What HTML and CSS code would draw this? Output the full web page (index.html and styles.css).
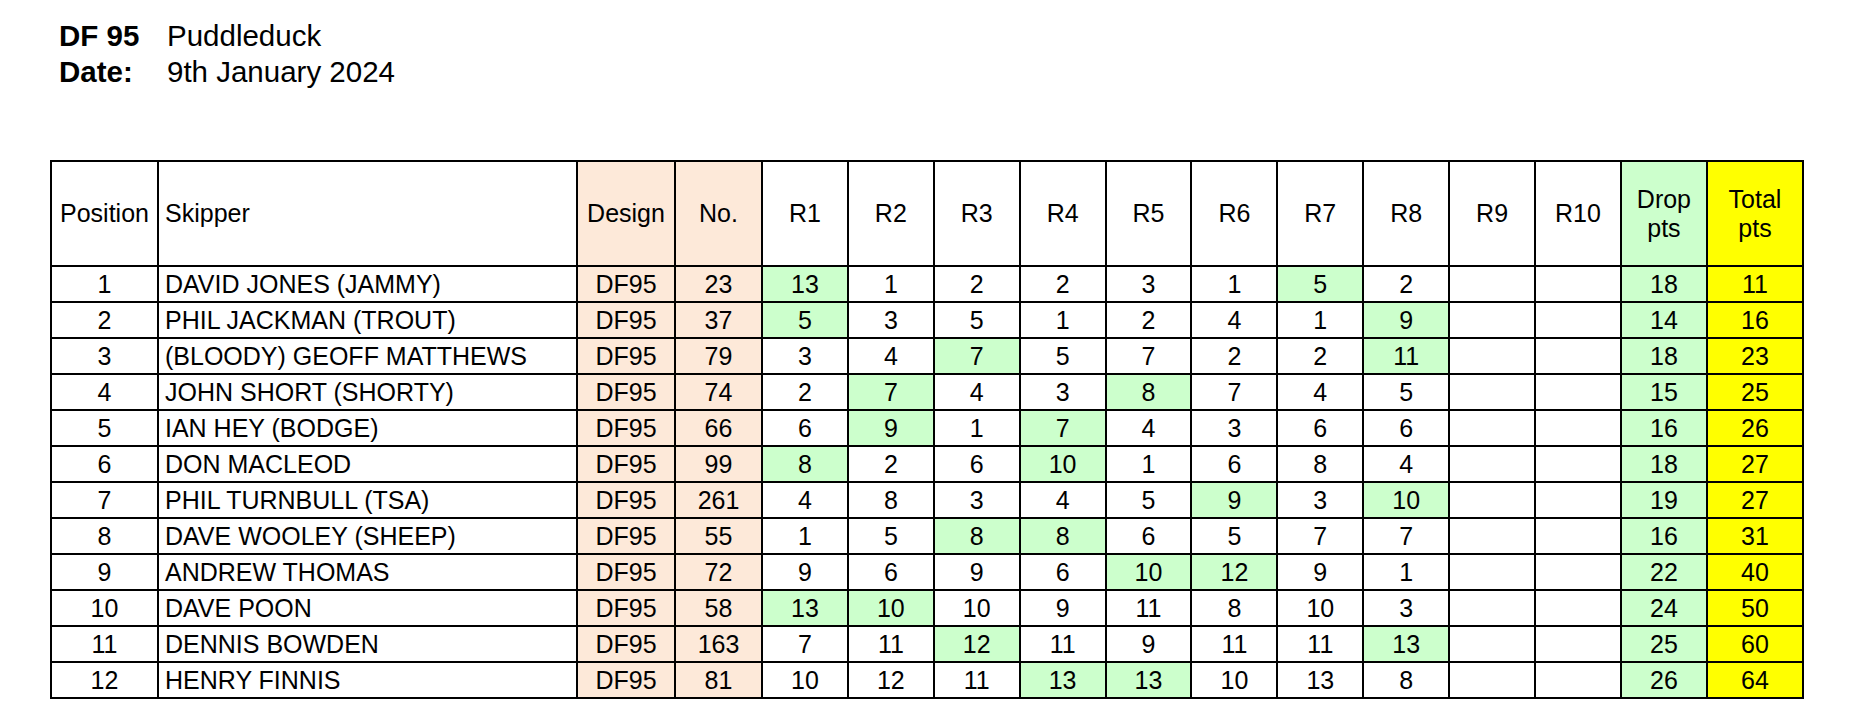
FILE: index.html
```html
<!DOCTYPE html>
<html>
<head>
<meta charset="utf-8">
<link rel="stylesheet" href="styles.css">
</head>
<body>
<div class="page">
  <div class="title">
    <div class="lbl">DF 95</div><div class="val">Puddleduck</div>
    <div class="lbl">Date:</div><div class="val">9th January 2024</div>
  </div>
  <table class="results">
    <colgroup>
      <col class="c-pos"><col class="c-skip"><col class="c-des"><col class="c-no">
      <col class="c-r"><col class="c-r"><col class="c-r"><col class="c-r"><col class="c-r">
      <col class="c-r"><col class="c-r"><col class="c-r"><col class="c-r"><col class="c-r">
      <col class="c-drop"><col class="c-tot">
    </colgroup>
    <thead>
      <tr>
        <th>Position</th><th class="left">Skipper</th><th class="peach">Design</th><th class="peach">No.</th>
        <th>R1</th><th>R2</th><th>R3</th><th>R4</th><th>R5</th><th>R6</th><th>R7</th><th>R8</th><th>R9</th><th>R10</th>
        <th class="green">Drop<br>pts</th><th class="yellow">Total<br>pts</th>
      </tr>
    </thead>
    <tbody>
      <tr><td>1</td><td class="left">DAVID JONES (JAMMY)</td><td class="peach">DF95</td><td class="peach">23</td><td class="green">13</td><td>1</td><td>2</td><td>2</td><td>3</td><td>1</td><td class="green">5</td><td>2</td><td></td><td></td><td class="green">18</td><td class="yellow">11</td></tr>
      <tr><td>2</td><td class="left">PHIL JACKMAN (TROUT)</td><td class="peach">DF95</td><td class="peach">37</td><td class="green">5</td><td>3</td><td>5</td><td>1</td><td>2</td><td>4</td><td>1</td><td class="green">9</td><td></td><td></td><td class="green">14</td><td class="yellow">16</td></tr>
      <tr><td>3</td><td class="left">(BLOODY) GEOFF MATTHEWS</td><td class="peach">DF95</td><td class="peach">79</td><td>3</td><td>4</td><td class="green">7</td><td>5</td><td>7</td><td>2</td><td>2</td><td class="green">11</td><td></td><td></td><td class="green">18</td><td class="yellow">23</td></tr>
      <tr><td>4</td><td class="left">JOHN SHORT (SHORTY)</td><td class="peach">DF95</td><td class="peach">74</td><td>2</td><td class="green">7</td><td>4</td><td>3</td><td class="green">8</td><td>7</td><td>4</td><td>5</td><td></td><td></td><td class="green">15</td><td class="yellow">25</td></tr>
      <tr><td>5</td><td class="left">IAN HEY (BODGE)</td><td class="peach">DF95</td><td class="peach">66</td><td>6</td><td class="green">9</td><td>1</td><td class="green">7</td><td>4</td><td>3</td><td>6</td><td>6</td><td></td><td></td><td class="green">16</td><td class="yellow">26</td></tr>
      <tr><td>6</td><td class="left">DON MACLEOD</td><td class="peach">DF95</td><td class="peach">99</td><td class="green">8</td><td>2</td><td>6</td><td class="green">10</td><td>1</td><td>6</td><td>8</td><td>4</td><td></td><td></td><td class="green">18</td><td class="yellow">27</td></tr>
      <tr><td>7</td><td class="left">PHIL TURNBULL (TSA)</td><td class="peach">DF95</td><td class="peach">261</td><td>4</td><td>8</td><td>3</td><td>4</td><td>5</td><td class="green">9</td><td>3</td><td class="green">10</td><td></td><td></td><td class="green">19</td><td class="yellow">27</td></tr>
      <tr><td>8</td><td class="left">DAVE WOOLEY (SHEEP)</td><td class="peach">DF95</td><td class="peach">55</td><td>1</td><td>5</td><td class="green">8</td><td class="green">8</td><td>6</td><td>5</td><td>7</td><td>7</td><td></td><td></td><td class="green">16</td><td class="yellow">31</td></tr>
      <tr><td>9</td><td class="left">ANDREW THOMAS</td><td class="peach">DF95</td><td class="peach">72</td><td>9</td><td>6</td><td>9</td><td>6</td><td class="green">10</td><td class="green">12</td><td>9</td><td>1</td><td></td><td></td><td class="green">22</td><td class="yellow">40</td></tr>
      <tr><td>10</td><td class="left">DAVE POON</td><td class="peach">DF95</td><td class="peach">58</td><td class="green">13</td><td class="green">10</td><td>10</td><td>9</td><td>11</td><td>8</td><td>10</td><td>3</td><td></td><td></td><td class="green">24</td><td class="yellow">50</td></tr>
      <tr><td>11</td><td class="left">DENNIS BOWDEN</td><td class="peach">DF95</td><td class="peach">163</td><td>7</td><td>11</td><td class="green">12</td><td>11</td><td>9</td><td>11</td><td>11</td><td class="green">13</td><td></td><td></td><td class="green">25</td><td class="yellow">60</td></tr>
      <tr><td>12</td><td class="left">HENRY FINNIS</td><td class="peach">DF95</td><td class="peach">81</td><td>10</td><td>12</td><td>11</td><td class="green">13</td><td class="green">13</td><td>10</td><td>13</td><td>8</td><td></td><td></td><td class="green">26</td><td class="yellow">64</td></tr>
    </tbody>
  </table>
</div>
</body>
</html>
```

FILE: styles.css
```css
html, body {
  margin: 0;
  padding: 0;
  background: #ffffff;
}

body {
  font-family: "Liberation Sans", Arial, sans-serif;
  color: #000000;
}

.page {
  padding-top: 18px;
}

.title {
  display: grid;
  grid-template-columns: 108px auto;
  margin-left: 59px;
  font-size: 29.5px;
  line-height: 36px;
}

.title .lbl {
  font-weight: bold;
}

.results {
  margin-top: 70px;
  margin-left: 50px;
  border-collapse: collapse;
  table-layout: fixed;
  width: 1754px;
  font-size: 25px;
}

.c-pos { width: 107px; }
.c-skip { width: 419px; }
.c-des { width: 98px; }
.c-no { width: 87px; }
.c-r { width: 85.9px; }
.c-drop { width: 86px; }
.c-tot { width: 96px; }

.results th,
.results td {
  border: 2px solid #000000;
  padding: 0;
  text-align: center;
  vertical-align: middle;
  font-weight: normal;
  white-space: nowrap;
  overflow: hidden;
}

.results thead tr {
  height: 105px;
}

.results th {
  line-height: 29px;
}

.results tbody tr {
  height: 36px;
}

.results td {
  line-height: 32px;
}

.results .left {
  text-align: left;
  padding-left: 6px;
}

.peach { background: #fde9d9; }
.green { background: #ccffcc; }
.yellow { background: #ffff00; }
```
